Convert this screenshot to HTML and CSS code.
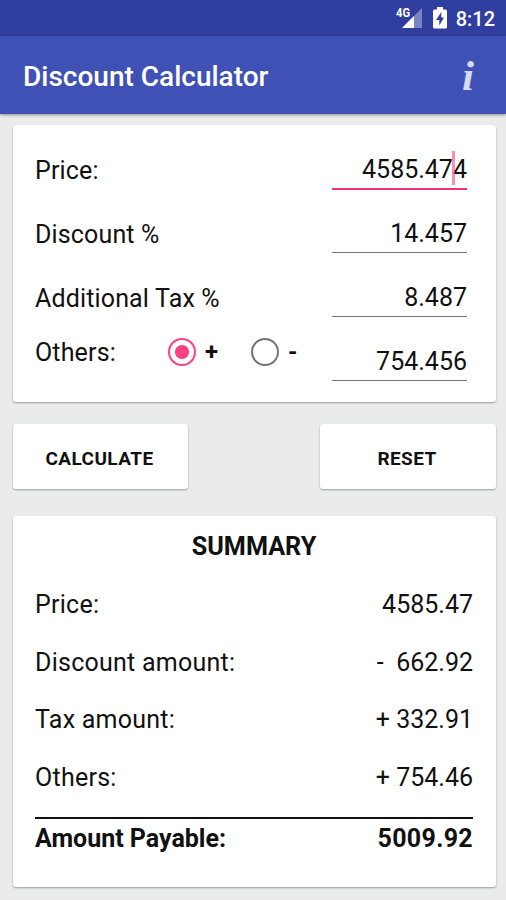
FILE: index.html
```html
<!DOCTYPE html>
<html lang="en">
<head>
  <meta charset="UTF-8">
  <title>Discount Calculator</title>
  <link rel="stylesheet" href="styles.css">
</head>
<body>
  <div class="status-bar">
    <svg class="signal" width="27" height="24" viewBox="0 0 27 24">
      <path d="M26 3V23H6Z" fill="#7b84c2"/>
      <path d="M18 11V23H6Z" fill="#fff"/>
      <text class="network" x="0" y="12" textLength="14" lengthAdjust="spacingAndGlyphs">4G</text>
    </svg>
    <svg class="battery" width="14" height="22" viewBox="0 0 14 22">
      <path d="M4 0h6v2.500h2.500a1.500 1.500 0 0 1 1.500 1.500v16a1.500 1.500 0 0 1-1.500 1.500h-11a1.500 1.500 0 0 1-1.500-1.500v-16a1.500 1.500 0 0 1 1.500-1.500h2.500z" fill="#fff"/>
      <path d="M8.300 5L3 13h3.300v5.500L11 10.500H8.300z" fill="#303f9f"/>
    </svg>
    <span class="clock">8:12</span>
  </div>
  <div class="app-bar">
    <h1>Discount Calculator</h1>
    <span class="info">i</span>
  </div>

  <div class="content">
    <div class="card form-card">
      <div class="row">
        <label>Price:</label>
        <div class="field focused">4585.47<span class="cursor"></span>4</div>
      </div>
      <div class="row">
        <label>Discount %</label>
        <div class="field">14.457</div>
      </div>
      <div class="row">
        <label>Additional Tax %</label>
        <div class="field">8.487</div>
      </div>
      <div class="row">
        <div class="others">
          <label>Others:</label>
          <span class="radio checked"></span><b class="plus">+</b>
          <span class="radio"></span><b>-</b>
        </div>
        <div class="field">754.456</div>
      </div>
    </div>

    <div class="buttons">
      <button>CALCULATE</button>
      <button>RESET</button>
    </div>

    <div class="card summary">
      <h2>SUMMARY</h2>
      <div class="line"><span class="name">Price:</span><span>4585.47</span></div>
      <div class="line"><span class="name">Discount amount:</span><span>-&nbsp; 662.92</span></div>
      <div class="line"><span class="name">Tax amount:</span><span>+ 332.91</span></div>
      <div class="line"><span class="name">Others:</span><span>+ 754.46</span></div>
      <div class="total"><span>Amount Payable:</span><span class="payable">5009.92</span></div>
    </div>
  </div>
</body>
</html>
```
FILE: styles.css
```css
* {
  box-sizing: border-box;
}
body {
  margin: 0;
  height: 900px;
  background: #eaeceb;
  color: #111;
  font-family: Roboto, sans-serif;
  font-size: 25px;
  overflow: hidden;
}
.status-bar {
  height: 36px;
  background: #303f9f;
  display: flex;
  align-items: center;
  justify-content: flex-end;
  padding-right: 11px;
  color: #fff;
}
.signal {
  margin: -2px 10px 0 0;
}
.network {
  font-size: 12px;
  font-weight: 700;
  fill: #fff;
}
.battery {
  margin-right: 9px;
}
.clock {
  font-size: 20px;
  font-weight: 500;
  line-height: 36px;
  padding-top: 2px;
}
.app-bar {
  height: 78px;
  background: #3f51b5;
  display: flex;
  align-items: center;
  justify-content: space-between;
  padding: 3px 32px 0 23px;
  color: #fff;
  box-shadow: 0 1px 3px rgba(0,0,0,0.4);
}
h1 {
  margin: 0;
  font-size: 28px;
  font-weight: 500;
}
.info {
  font-family: "Liberation Serif", serif;
  font-size: 43px;
  font-weight: 700;
  font-style: italic;
  line-height: 60px;
  padding-bottom: 2px;
  color: #d3dbf7;
}
.content {
  padding: 11px 10px 0 13px;
}
.card, button {
  background: #fff;
  border-radius: 3px;
  box-shadow: 0 1px 2px rgba(0,0,0,0.35);
}
.form-card {
  height: 277px;
  padding: 13px 29px 0 22px;
}
.row {
  height: 64px;
  display: flex;
  align-items: center;
  justify-content: space-between;
}
label {
  letter-spacing: 0.15px;
}
.name {
  letter-spacing: 0.25px;
}
.field {
  position: relative;
  width: 135px;
  height: 39px;
  margin-bottom: 1px;
  line-height: 40px;
  text-align: right;
  border-bottom: 1px solid #777;
}
.focused {
  height: 40px;
  margin-bottom: 0;
  border-bottom: 2px solid #f0307c;
}
.cursor {
  position: absolute;
  top: 1px;
  right: 12px;
  width: 3px;
  height: 34px;
  background: rgba(255,64,129,0.6);
}
.others {
  display: flex;
  align-items: center;
  padding-bottom: 20px;
}
.others label {
  width: 133px;
}
.others b {
  width: 14px;
  margin-left: 9px;
  font-size: 24px;
}
.others .plus {
  margin-right: 32px;
}
.radio {
  width: 28px;
  height: 28px;
  border: 2px solid #757575;
  border-radius: 50%;
}
.checked {
  border-color: #ff4081;
  background: radial-gradient(circle, #ff4081 6.5px, #fff 7.5px);
}
.buttons {
  display: flex;
  justify-content: space-between;
  margin: 22px 0 27px;
}
button {
  width: 175px;
  height: 65px;
  padding: 4px 2px 0 0;
  border: none;
  color: #111;
  font-family: inherit;
  font-size: 19px;
  font-weight: 700;
  letter-spacing: 0.4px;
}
button:last-child {
  width: 176px;
}
.summary {
  height: 371px;
  padding: 2px 23px 0 22px;
}
h2 {
  margin: 0;
  font-size: 25.2px;
  font-weight: 700;
  line-height: 58px;
  text-align: center;
}
.line {
  display: flex;
  justify-content: space-between;
  line-height: 57.7px;
}
.total {
  display: flex;
  justify-content: space-between;
  margin-top: 10px;
  border-top: 2px solid #111;
  font-weight: 700;
  line-height: 39px;
}
.payable {
  letter-spacing: 0.3px;
}
```
